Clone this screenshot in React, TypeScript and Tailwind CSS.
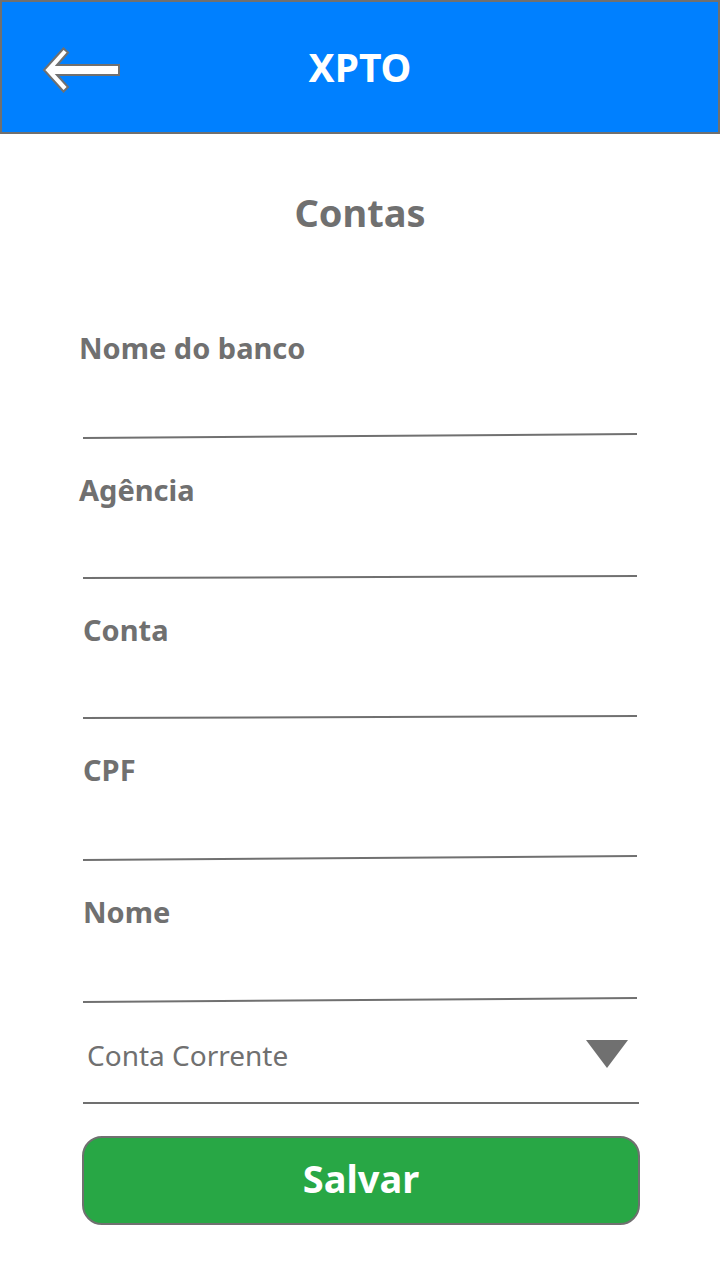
type FieldProps = {
  id: string;
  label: string;
  slope: number;
  indent?: boolean;
};

const fields: FieldProps[] = [
  { id: "banco", label: "Nome do banco", slope: 4 },
  { id: "agencia", label: "Agência", slope: 2 },
  { id: "conta", label: "Conta", slope: 2, indent: true },
  { id: "cpf", label: "CPF", slope: 4, indent: true },
  { id: "nome", label: "Nome", slope: 4, indent: true },
];

function Field({ id, label, slope, indent }: FieldProps) {
  const height = slope + 2;
  return (
    <div className="flex flex-col">
      <label
        htmlFor={id}
        className={`text-[29px] leading-[38px] font-bold ${indent ? "pl-1" : "pl-0"}`}
      >
        {label}
      </label>
      <input
        id={id}
        type="text"
        className="h-[66px] w-full bg-transparent px-2 text-[28px] outline-none"
      />
      <div className="px-1">
        <svg
          aria-hidden="true"
          className="block w-full"
          height={height}
          viewBox={`0 0 554 ${height}`}
          preserveAspectRatio="none"
        >
          <line x1="0" y1={height - 1} x2="554" y2="1" stroke="#707070" strokeWidth="2" />
        </svg>
      </div>
    </div>
  );
}

export default function App() {
  return (
    <div className="min-h-screen bg-white font-['Noto_Sans','Open_Sans',sans-serif] text-[#707070]">
      <header className="grid grid-cols-[1fr_auto_1fr] items-center border-2 border-[#707070] bg-[#0080ff] px-10 py-9">
        <a href="#voltar" aria-label="Voltar" className="justify-self-start">
          <svg width="80" height="54" viewBox="0 0 80 54" className="block">
            <path
              d="M2 30 L21.5 8.5 L26 12.5 L15 25 H77 V35 H15 L26 47 L21.5 51.5 Z"
              fill="#fff"
              stroke="#707070"
              strokeWidth="2"
            />
          </svg>
        </a>
        <p className="text-[39px] leading-[58px] font-bold text-white">XPTO</p>
      </header>
      <main className="pt-12 pb-14">
        <h1 className="text-center text-[38px] leading-[60px] font-bold">Contas</h1>
        <form className="px-[79px] pt-[87px]" onSubmit={(e) => e.preventDefault()}>
          <div className="flex flex-col gap-8">
            {fields.map((field) => (
              <Field key={field.id} {...field} />
            ))}
          </div>
          <div className="mt-[25px] pr-0.5 pl-1">
            <div className="relative border-b-2 border-[#707070]">
              <select
                aria-label="Tipo de conta"
                className="block h-[74px] w-full appearance-none bg-transparent pb-5 pl-1 text-[28px] leading-10 outline-none"
              >
                <option>Conta Corrente</option>
                <option>Conta Poupança</option>
              </select>
              <svg
                aria-hidden="true"
                width="42"
                height="28"
                viewBox="0 0 42 28"
                className="pointer-events-none absolute top-3 right-[11px]"
              >
                <path d="M0 0 H42 L21 28 Z" fill="#707070" />
              </svg>
            </div>
          </div>
          <div className="mt-8 pr-px pl-[3px]">
            <button
              type="submit"
              className="block w-full rounded-[20px] border-2 border-[#707070] bg-[#28a745] pt-3 pb-[17px] text-[38px] leading-[56px] font-bold text-white"
            >
              Salvar
            </button>
          </div>
        </form>
      </main>
    </div>
  );
}
